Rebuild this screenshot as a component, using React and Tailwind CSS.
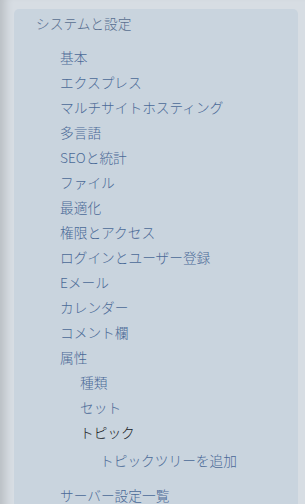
import React from 'react';

const items = [
  { label: '基本', level: 1 },
  { label: 'エクスプレス', level: 1 },
  { label: 'マルチサイトホスティング', level: 1 },
  { label: '多言語', level: 1 },
  { label: 'SEOと統計', level: 1 },
  { label: 'ファイル', level: 1 },
  { label: '最適化', level: 1 },
  { label: '権限とアクセス', level: 1 },
  { label: 'ログインとユーザー登録', level: 1 },
  { label: 'Eメール', level: 1 },
  { label: 'カレンダー', level: 1 },
  { label: 'コメント欄', level: 1 },
  { label: '属性', level: 1 },
  { label: '種類', level: 2 },
  { label: 'セット', level: 2 },
  { label: 'トピック', level: 2, active: true },
];

const SettingsNav = () => {
  return (
    <div className="min-h-screen bg-[#d7dde3] shadow-[inset_11px_0_8px_-6px_rgba(0,0,0,0.14)] pt-[9px] pl-[14px] pr-[7px] font-['Noto_Sans_CJK_JP',sans-serif] font-light text-[13.7px]">
      <div className="rounded-[5px] bg-[#c9d4de] pb-4">
        {/* Header */}
        <div className="h-[28px] flex items-center pl-[22px] text-[#586f90]">システムと設定</div>

        {/* Menu */}
        <ul className="mt-[8px]">
          {items.map((item) => (
            <li
              key={item.label}
              className={`h-[25px] flex items-center ${item.level === 2 ? 'pl-[66px]' : 'pl-[46px]'} ${
                item.active ? 'text-[#15181c]' : 'text-[#4b6a97]'
              }`}
            >
              {item.label}
            </li>
          ))}
          <li className="h-[25px] mt-[3px] flex items-center pl-[86px] text-[#4b6a97]">トピックツリーを追加</li>
          <li className="h-[25px] mt-[10px] flex items-center pl-[46px] text-[#4b6a97]">サーバー設定一覧</li>
        </ul>
      </div>
    </div>
  );
};

export default function App() {
  return <SettingsNav />;
}
